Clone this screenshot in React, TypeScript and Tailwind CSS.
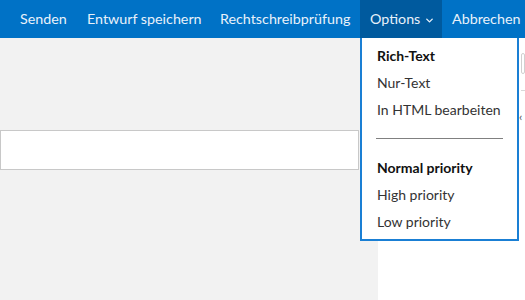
import { ChevronDown } from 'lucide-react';

const font = { fontFamily: 'Lato, "Open Sans", sans-serif' };

function BarItem({ label, width, active }: { label: string; width: string; active?: boolean }) {
  return (
    <div
      className={
        'flex h-full shrink-0 items-center pl-[10px] text-[14.3px] text-[#e8f1fa] ' +
        width +
        (active ? ' bg-[#005a9e]' : '')
      }
    >
      {label}
      {active && <ChevronDown size={11} strokeWidth={3} className="ml-[4px] mt-[2px]" />}
    </div>
  );
}

function MenuItem({ label, bold }: { label: string; bold?: boolean }) {
  return (
    <div className={'h-[27px] flex items-center pl-[15px] text-[14px] ' + (bold ? 'font-bold text-[#111]' : 'text-[#333]')}>
      {label}
    </div>
  );
}

export default function App() {
  return (
    <div className="relative h-[300px] w-[525px] overflow-hidden bg-white" style={font}>
      <div className="flex h-[38px] bg-[#0072c6] pl-[10px]">
        <BarItem label="Senden" width="w-[67px]" />
        <BarItem label="Entwurf speichern" width="w-[133px]" />
        <BarItem label="Rechtschreibprüfung" width="w-[150px]" />
        <BarItem label="Options" width="w-[82px]" active />
        <BarItem label="Abbrechen" width="w-[90px]" />
      </div>

      <div className="flex h-[262px]">
        <div className="w-[378px] bg-[#f2f2f2] pt-[92px]">
          <div className="h-[40px] w-[359px] border border-[#c8c8c8] bg-white" />
        </div>
        <div className="flex-1 pl-[143px] pt-[15px]">
          <div className="h-[21px] rounded-[3px] border border-[#d0d0d0]" />
          <div className="mt-[16px] border-t border-[#d8d8d8]" />
          <div className="ml-[-2px] mt-[20px] text-[12px] leading-none text-[#555]">‹</div>
        </div>
      </div>

      <div className="absolute left-[360px] top-[38px] w-[159px] border-2 border-t-0 border-[#1a7fd4] bg-white pb-[4px] pt-[4px]">
        <MenuItem label="Rich-Text" bold />
        <MenuItem label="Nur-Text" />
        <MenuItem label="In HTML bearbeiten" />
        <div className="mx-[14px] my-[15px] border-t border-[#808080]" />
        <MenuItem label="Normal priority" bold />
        <MenuItem label="High priority" />
        <MenuItem label="Low priority" />
      </div>
    </div>
  );
}
